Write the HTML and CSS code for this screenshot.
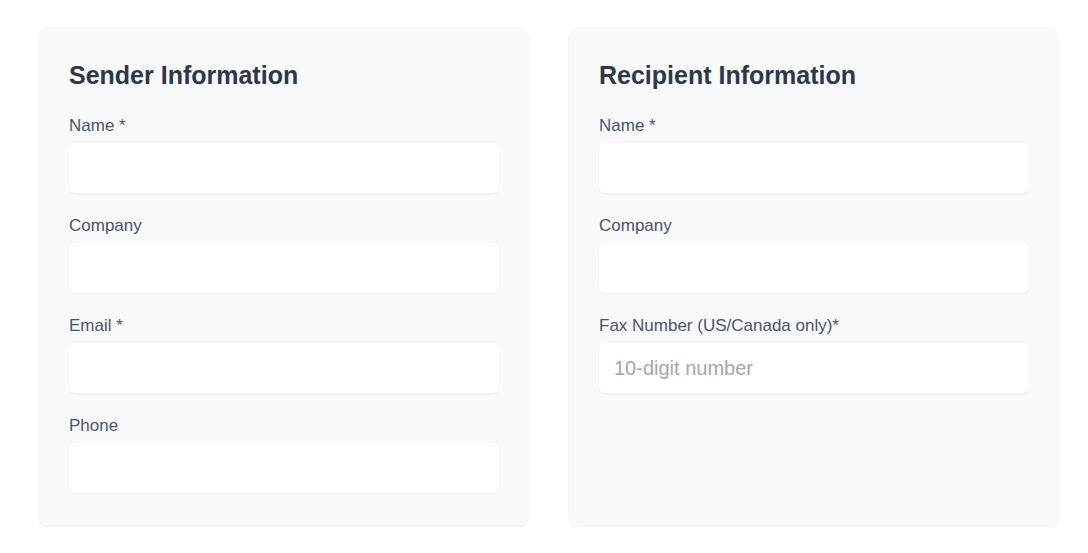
FILE: index.html
```html
<!DOCTYPE html>
<html lang="en">
<head>
<meta charset="utf-8">
<title>Fax Form</title>
<link rel="stylesheet" href="styles.css">
</head>
<body>
<div class="page">
  <section class="card">
    <h2 class="card-title">Sender Information</h2>
    <div class="field">
      <label class="label">Name *</label>
      <input class="input" type="text">
    </div>
    <div class="field">
      <label class="label">Company</label>
      <input class="input" type="text">
    </div>
    <div class="field">
      <label class="label">Email *</label>
      <input class="input" type="email">
    </div>
    <div class="field">
      <label class="label">Phone</label>
      <input class="input" type="tel">
    </div>
  </section>
  <section class="card">
    <h2 class="card-title">Recipient Information</h2>
    <div class="field">
      <label class="label">Name *</label>
      <input class="input" type="text">
    </div>
    <div class="field">
      <label class="label">Company</label>
      <input class="input" type="text">
    </div>
    <div class="field">
      <label class="label">Fax Number (US/Canada only)*</label>
      <input class="input" type="tel" placeholder="10-digit number">
    </div>
  </section>
</div>
</body>
</html>
```
FILE: styles.css
```css
html, body {
  margin: 0;
  padding: 0;
  background: #ffffff;
  font-family: "Liberation Sans", Arial, sans-serif;
}

.page {
  display: grid;
  grid-template-columns: 489px 489px;
  column-gap: 41px;
  padding: 28px 0 0 39px;
  align-items: stretch;
}

.card {
  background: #f8f9fb;
  border-radius: 10px;
  box-shadow: 0 0 0 1px rgba(0, 0, 0, 0.025), 0 1px 3px rgba(0, 0, 0, 0.04);
  padding: 33px 29px 11px 30px;
  display: flex;
  flex-direction: column;
}

.card-title {
  margin: 0 0 26px;
  font-size: 25px;
  line-height: 29px;
  font-weight: 700;
  color: #2d3748;
}

.field {
  display: flex;
  flex-direction: column;
  margin-bottom: 23px;
}

.label {
  font-size: 17px;
  line-height: 19px;
  color: #4a5568;
  margin-bottom: 8px;
}

.input {
  box-sizing: border-box;
  height: 50px;
  width: 100%;
  border: none;
  border-radius: 6px;
  background: #ffffff;
  box-shadow: 0 1px 2px rgba(0, 0, 0, 0.05);
  padding: 0 15px;
  font-family: "Liberation Sans", Arial, sans-serif;
  font-size: 20px;
  color: #2d3748;
  outline: none;
}

.input::placeholder {
  color: #a0a7b4;
}
```
